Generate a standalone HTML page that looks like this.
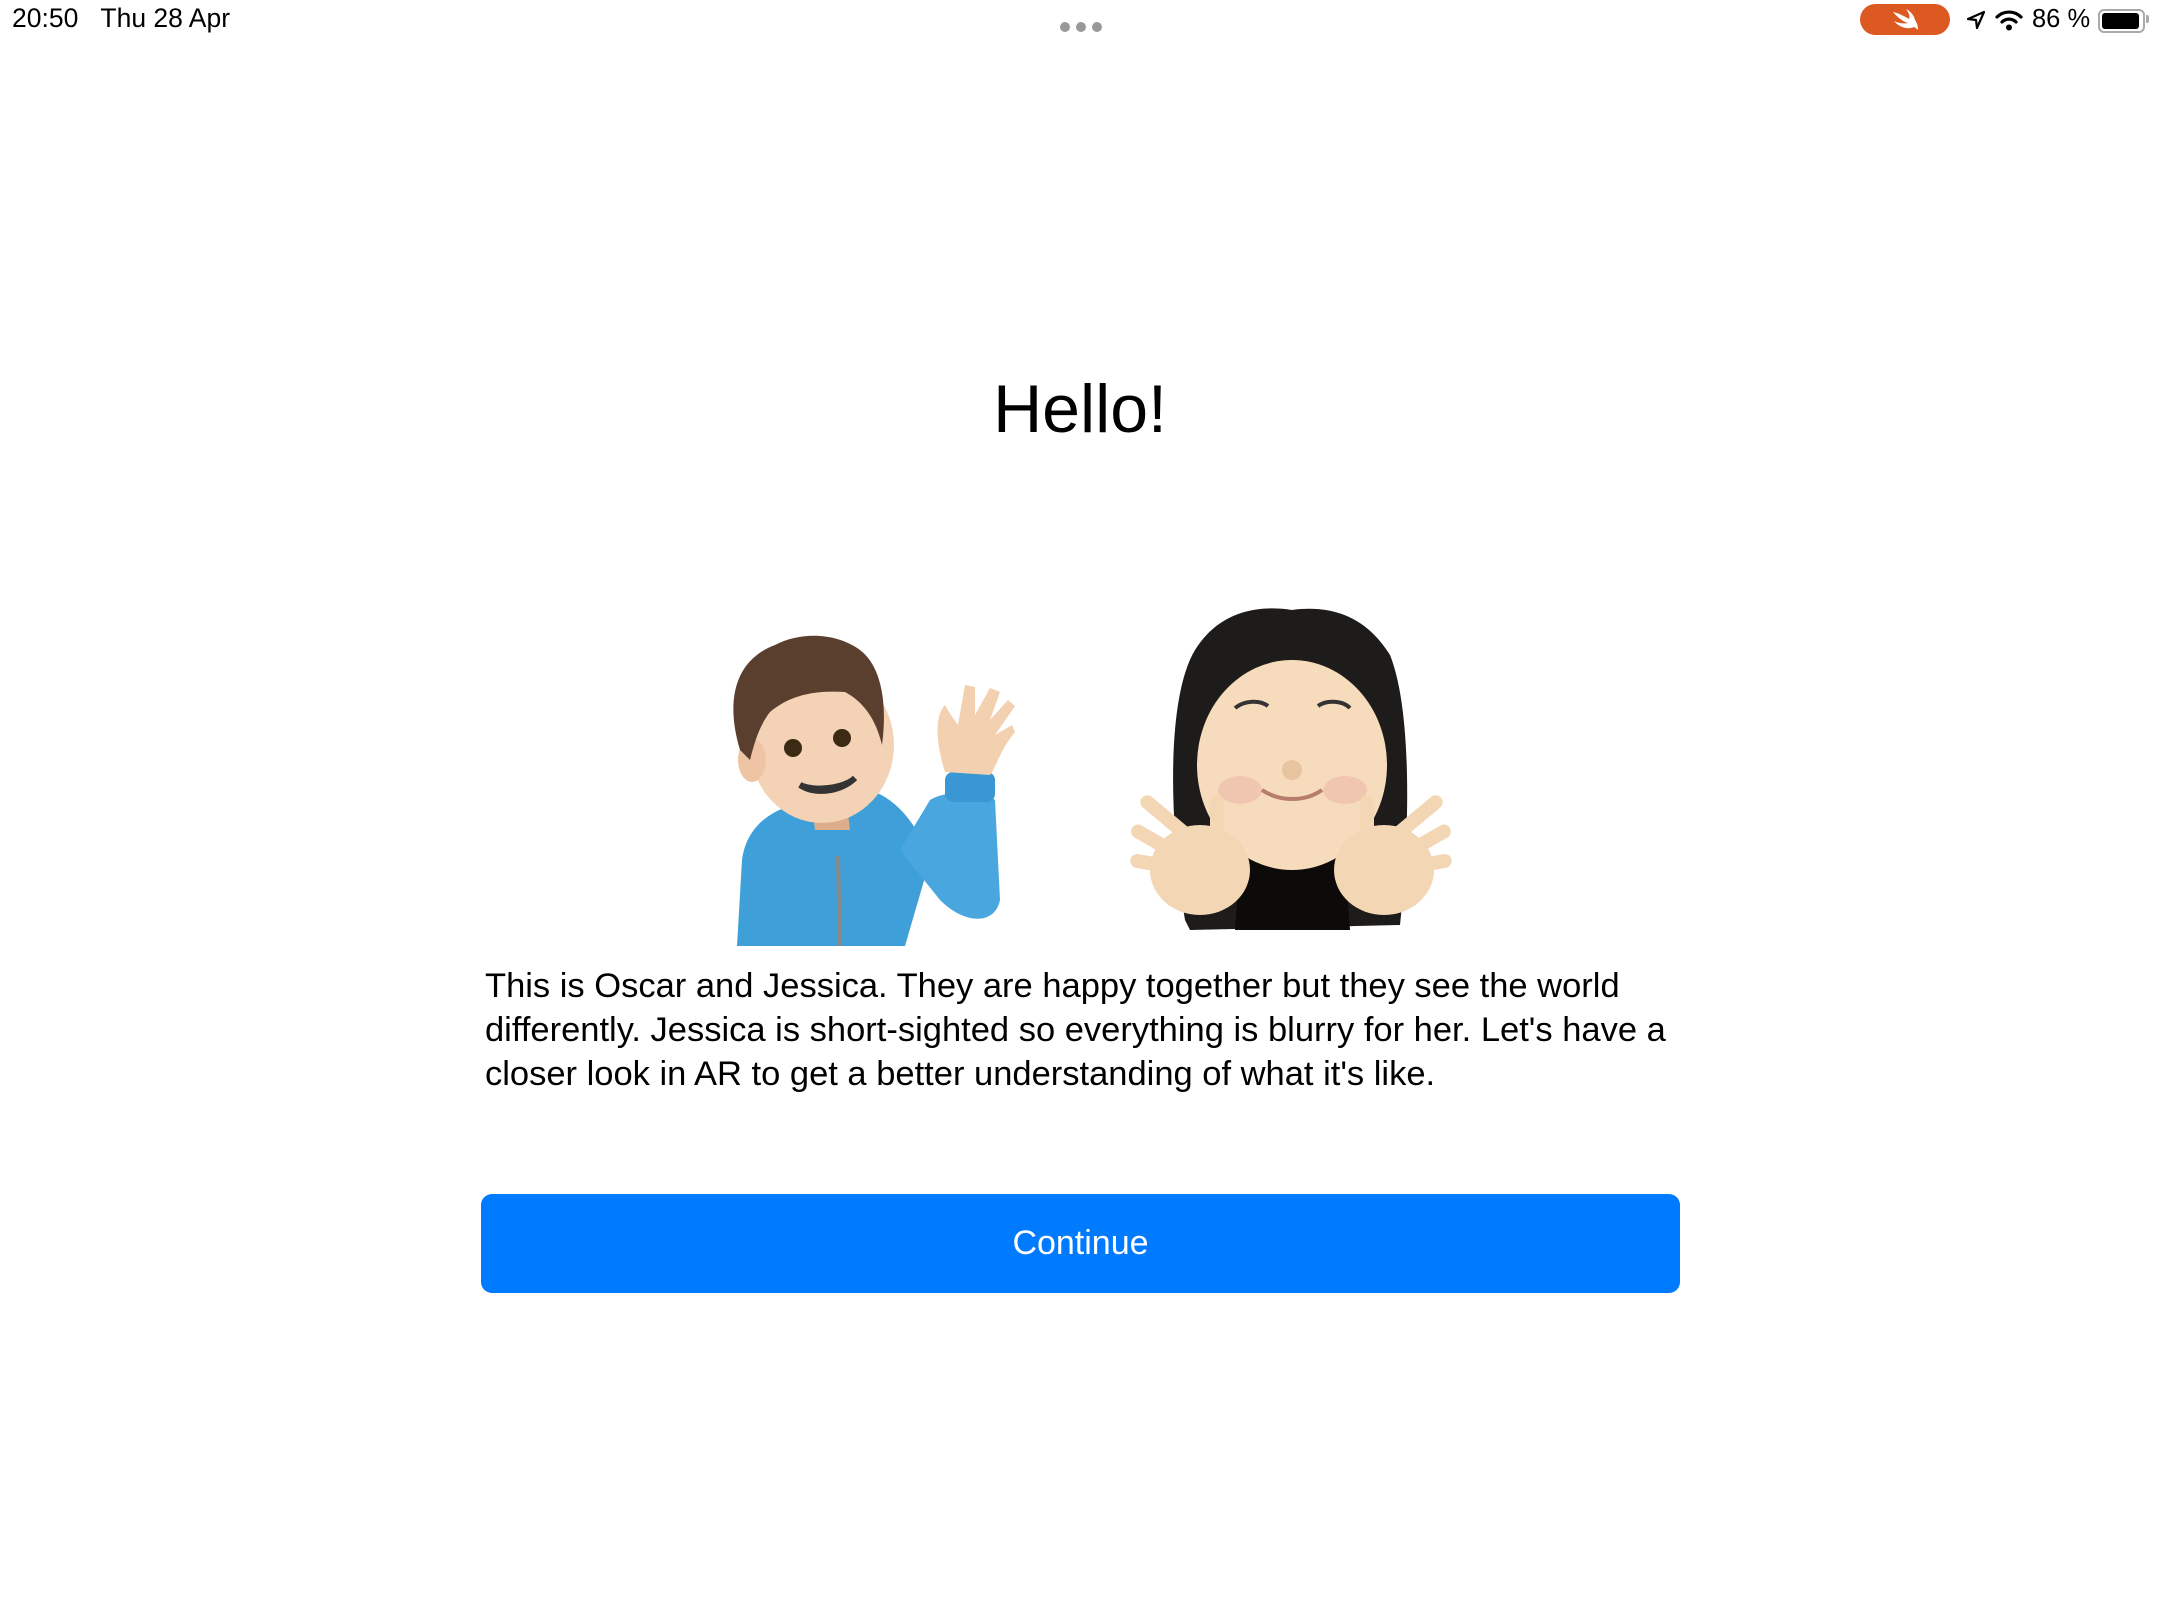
<!DOCTYPE html>
<html><head><meta charset="utf-8">
<style>
html,body{margin:0;padding:0;background:#fff;width:2160px;height:1620px;overflow:hidden;position:relative;font-family:"Liberation Sans",sans-serif;color:#000}
.abs{position:absolute;white-space:nowrap}
</style></head><body>
<div class="abs" style="left:12px;top:3px;font-size:26.5px;">20:50&nbsp;&nbsp;&nbsp;Thu 28 Apr</div>
<div class="abs" style="left:1060px;top:19px;">
<span style="display:inline-block;width:10px;height:10px;border-radius:5px;background:#999;margin-right:6px"></span><span style="display:inline-block;width:10px;height:10px;border-radius:5px;background:#999;margin-right:6px"></span><span style="display:inline-block;width:10px;height:10px;border-radius:5px;background:#999"></span></div>
<div class="abs" style="left:1860px;top:4px;width:90px;height:31px;border-radius:16px;background:#dc5a22"></div>
<svg class="abs" style="left:1890px;top:8px" width="30" height="24" viewBox="0 0 30 24"><path d="M3 4 C8 10 14 14 18 15 C13 16 8 15 4 13 C9 19 17 22 24 19 C26 20 27 21 28 22 C28 18 27 15 25 12 C24 7 20 3 16 1 C19 5 20 8 19 11 C14 8 8 5 3 4Z" fill="#fff"/></svg>
<svg class="abs" style="left:1966px;top:10px" width="20" height="20" viewBox="0 0 20 20"><path d="M18 2 L2 9 L10 10 L11 18 Z" fill="none" stroke="#000" stroke-width="2.2" stroke-linejoin="round"/></svg>
<svg class="abs" style="left:1995px;top:9px" width="28" height="22" viewBox="0 0 28 22"><path d="M2 8 A17 17 0 0 1 26 8" fill="none" stroke="#000" stroke-width="3.2" stroke-linecap="round"/><path d="M7 13 A10 10 0 0 1 21 13" fill="none" stroke="#000" stroke-width="3.2" stroke-linecap="round"/><circle cx="14" cy="18.5" r="3" fill="#000"/></svg>
<div class="abs" style="left:2032px;top:5px;font-size:25.5px;">86 %</div>
<div class="abs" style="left:2098px;top:9px;width:43px;height:20px;border:2px solid #aaa;border-radius:6px;"></div>
<div class="abs" style="left:2102px;top:13px;width:37px;height:16px;background:#000;border-radius:3px;"></div>
<div class="abs" style="left:2146px;top:15px;width:3px;height:8px;background:#aaa;border-radius:0 2px 2px 0"></div>

<div class="abs" style="left:0;width:2160px;text-align:center;top:370px;font-size:68px;">Hello!</div>

<svg class="abs" style="left:0;top:0" width="2160" height="1620" viewBox="0 0 2160 1620">
<path d="M737 946 L742 860 C748 815 790 800 830 800 L870 790 C900 800 920 830 930 860 L905 946Z" fill="#3f9fd8"/>
<path d="M930 800 C945 790 985 790 995 800 L1000 900 C995 925 965 925 940 900 L900 850Z" fill="#4aa6de"/>
<rect x="945" y="772" width="50" height="30" rx="8" fill="#3a97d3"/>
<path d="M838 856 L840 946" stroke="#888" stroke-width="4"/>
<path d="M945 772 C935 740 935 715 945 705 C950 715 955 720 958 725 L965 685 L975 687 L975 715 L990 688 L1000 692 L990 720 L1008 700 L1015 706 L995 735 L1012 725 L1015 732 C1000 750 995 770 990 775Z" fill="#f2d0b0"/>
<path d="M810 790 L845 790 L850 830 L815 830Z" fill="#dcae8c"/>
<ellipse cx="822" cy="745" rx="72" ry="78" fill="#f4d2b6"/>
<ellipse cx="752" cy="760" rx="14" ry="22" fill="#eec4a4"/>
<path d="M740 750 C725 700 735 660 775 645 C800 632 835 632 860 650 C880 665 888 700 882 745 C875 715 860 700 845 692 C815 690 790 695 770 712 C760 725 755 740 750 760Z" fill="#5a3e2e"/>
<circle cx="793" cy="748" r="9" fill="#3b2a14"/><circle cx="842" cy="738" r="9" fill="#3b2a14"/>
<path d="M800 785 C815 795 840 792 855 778 C845 788 815 792 800 785Z" fill="#333" stroke="#333" stroke-width="6"/>
<path d="M1185 920 C1170 830 1165 700 1195 650 C1220 610 1260 605 1292 610 C1330 605 1365 615 1390 655 C1412 710 1410 830 1400 925 L1190 930Z" fill="#1e1c1a"/>
<path d="M1240 860 L1345 860 L1350 930 L1235 930Z" fill="#0d0b0a"/>
<ellipse cx="1292" cy="765" rx="95" ry="105" fill="#f6dcbc"/>
<ellipse cx="1240" cy="790" rx="22" ry="14" fill="#efb8a8" opacity=".6"/><ellipse cx="1345" cy="790" rx="22" ry="14" fill="#efb8a8" opacity=".6"/>
<path d="M1235 708 C1245 700 1260 700 1268 706 M1318 706 C1326 700 1342 700 1350 708" stroke="#333" stroke-width="4" fill="none"/>
<path d="M1262 790 C1280 802 1305 802 1322 790" stroke="#b87c6c" stroke-width="4" fill="none"/>
<circle cx="1292" cy="770" r="10" fill="#e8c4a0"/>
<g fill="#f3d6b4">
<ellipse cx="1200" cy="870" rx="50" ry="45"/>
<rect x="1128" y="836" width="60" height="14" rx="7" transform="rotate(30 1158 843)"/>
<rect x="1130" y="858" width="60" height="14" rx="7" transform="rotate(10 1160 865)"/>
<rect x="1135" y="810" width="60" height="14" rx="7" transform="rotate(40 1165 817)"/>
<rect x="1210" y="795" width="14" height="50" rx="7"/>
<ellipse cx="1384" cy="870" rx="50" ry="45"/>
<rect x="1394" y="836" width="60" height="14" rx="7" transform="rotate(-30 1424 843)"/>
<rect x="1392" y="858" width="60" height="14" rx="7" transform="rotate(-10 1422 865)"/>
<rect x="1388" y="810" width="60" height="14" rx="7" transform="rotate(-40 1418 817)"/>
<rect x="1360" y="795" width="14" height="50" rx="7"/>
</g>
</svg>

<div class="abs" style="left:485px;top:964px;font-size:34.5px;line-height:44px;">This is Oscar and Jessica. They are happy together but they see the world<br>differently. Jessica is short-sighted so everything is blurry for her. Let's have a<br>closer look in AR to get a better understanding of what it's like.</div>

<div class="abs" style="left:481px;top:1194px;width:1199px;height:99px;border-radius:11px;background:#007aff;color:#fff;font-size:34px;text-align:center;line-height:99px;">Continue</div>
</body></html>
